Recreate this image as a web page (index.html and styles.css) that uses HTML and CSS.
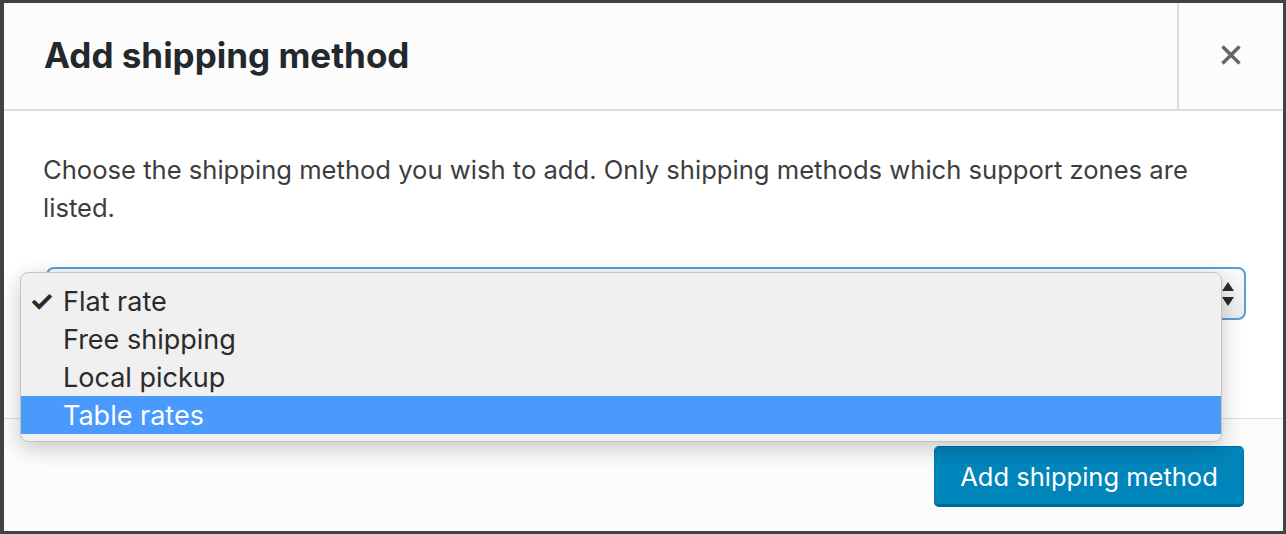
FILE: index.html
```
<!DOCTYPE html>
<html>
<head>
<meta charset="utf-8">
<link rel="stylesheet" href="styles.css">
</head>
<body>
<div class="modal">
  <header class="modal-header">
    <h1 class="modal-title">Add shipping method</h1>
    <button class="modal-close" aria-label="Close">
      <svg width="22" height="22" viewBox="0 0 22 22"><path d="M2.5 2.5 L19.5 19.5 M19.5 2.5 L2.5 19.5" stroke="#666" stroke-width="3.4" stroke-linecap="butt" fill="none"/></svg>
    </button>
  </header>
  <section class="modal-body">
    <p class="intro">Choose the shipping method you wish to add. Only shipping methods which support zones are listed.</p>
    <div class="select-wrap">
      <div class="select">
        <span class="select-arrows">
          <svg width="14" height="26" viewBox="0 0 14 26"><path d="M7 1 L13 10 L1 10 Z M1 16 L13 16 L7 25 Z" fill="#2a2a2a"/></svg>
        </span>
      </div>
      <ul class="dropdown">
        <li class="option"><span class="check">✓</span>Flat rate</li>
        <li class="option"><span class="check"></span>Free shipping</li>
        <li class="option"><span class="check"></span>Local pickup</li>
        <li class="option selected"><span class="check"></span>Table rates</li>
      </ul>
    </div>
  </section>
  <footer class="modal-footer">
    <button class="btn-primary">Add shipping method</button>
  </footer>
</div>
</body>
</html>
```
FILE: styles.css
```
html, body {
  margin: 0;
  padding: 0;
  height: 100%;
}
body {
  background: #424242;
  font-family: Inter, "Liberation Sans", Arial, sans-serif;
  overflow: hidden;
}
.modal {
  margin: 3px 3px 3px 4px;
  height: 528px;
  background: #fff;
  display: flex;
  flex-direction: column;
}
.modal-header {
  height: 106px;
  border-bottom: 2px solid #dddddd;
  background: #fcfcfc;
  display: flex;
  align-items: stretch;
}
.modal-title {
  flex: 1;
  margin: 0;
  padding-left: 40px;
  display: flex;
  align-items: center;
  font-size: 35px;
  font-weight: 700;
  color: #23282d;
  letter-spacing: 0;
  padding-bottom: 2px;
}
.modal-close {
  width: 106px;
  border: none;
  border-left: 2px solid #dddddd;
  background: #fcfcfc;
  padding: 0;
  display: flex;
  align-items: center;
  justify-content: center;
  padding-bottom: 2px;
}
.modal-body {
  flex: 1;
  padding: 40px 37px 0 39px;
}
.intro {
  margin: 0;
  font-size: 25.6px;
  line-height: 38px;
  color: #3d3d3d;
}
.select-wrap {
  position: relative;
  margin-top: 40px;
  margin-left: 3px;
}
.select {
  height: 49px;
  border: 2px solid #5b9dd9;
  border-radius: 8px;
  background: linear-gradient(#fbfbfb, #ececec);
  display: flex;
  justify-content: flex-end;
  align-items: center;
}
.select-arrows {
  margin-right: 9px;
  display: flex;
}
.dropdown {
  position: absolute;
  left: -26px;
  top: 5px;
  width: 1200px;
  margin: 0;
  padding: 9px 0 7px;
  list-style: none;
  background: #f0f0f0;
  border: 1px solid #c4c4c4;
  border-radius: 8px;
  box-shadow: 0 6px 22px rgba(0,0,0,0.22);
}
.option {
  height: 38px;
  display: flex;
  align-items: center;
  font-size: 27px;
  color: #2b2b2b;
}
.check {
  width: 42px;
  padding-left: 8px;
  box-sizing: border-box;
  font-size: 28px;
  font-weight: 700;
}
.option.selected {
  background: #4a99fd;
  color: #fff;
}
.modal-footer {
  height: 113px;
  border-top: 1px solid #dddddd;
  background: #fcfcfc;
  display: flex;
  justify-content: flex-end;
  align-items: flex-start;
  padding: 27px 39px 0 0;
  box-sizing: border-box;
}
.btn-primary {
  width: 310px;
  height: 61px;
  background: #0085ba;
  border: 1px solid #0073aa;
  border-bottom: 3px solid #006799;
  border-radius: 5px;
  color: #fff;
  font-family: Inter, "Liberation Sans", Arial, sans-serif;
  font-size: 25.5px;
  padding: 0;
  padding-top: 2px;
}
```
